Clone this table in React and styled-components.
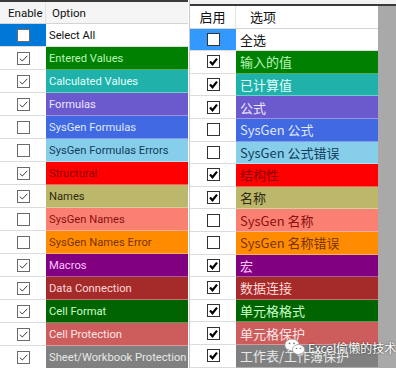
import React from 'react';
import styled, { createGlobalStyle } from 'styled-components';

const Global = createGlobalStyle`
  html, body {
    margin: 0;
    padding: 0;
    background: #ffffff;
  }
`;

const en = [
    { label: 'Select All', bg: '#ffffff', fg: '#111111', on: false, all: true },
    { label: 'Entered Values', bg: '#008000', fg: '#b8f5b8', on: true },
    { label: 'Calculated Values', bg: '#20b2aa', fg: '#e2fffd', on: true },
    { label: 'Formulas', bg: '#6a5acd', fg: '#ece6ff', on: true },
    { label: 'SysGen Formulas', bg: '#4169e1', fg: '#dfe8ff', on: false },
    { label: 'SysGen Formulas Errors', bg: '#87ceeb', fg: '#123c5c', on: false },
    { label: 'Structural', bg: '#ff0000', fg: '#8a0000', on: true },
    { label: 'Names', bg: '#bdb76b', fg: '#2e2c10', on: true },
    { label: 'SysGen Names', bg: '#fa8072', fg: '#8b1010', on: false },
    { label: 'SysGen Names Error', bg: '#ff8c00', fg: '#7a3300', on: false },
    { label: 'Macros', bg: '#800080', fg: '#ffc4ff', on: true },
    { label: 'Data Connection', bg: '#a52a2a', fg: '#ffdada', on: true },
    { label: 'Cell Format', bg: '#006400', fg: '#c6ffc6', on: true },
    { label: 'Cell Protection', bg: '#cd5c5c', fg: '#ffe6e6', on: true },
    { label: 'Sheet/Workbook Protection', bg: '#808080', fg: '#e8e8e8', on: true },
];

const zh = [
    '全选', '输入的值', '已计算值', '公式', 'SysGen 公式', 'SysGen 公式错误', '结构性', '名称',
    'SysGen 名称', 'SysGen 名称错误', '宏', '数据连接', '单元格格式', '单元格保护', '工作表/工作簿保护',
];

const Stage = styled.div`
  position: relative;
  width: 396px;
  height: 368px;
  overflow: hidden;
  display: flex;
  background: #ffffff;
`;

const LeftPanel = styled.div`
  width: 188px;
  flex: none;
  border-top: 2px solid #3a3a3a;
  font-family: "Segoe UI", Roboto, "Noto Sans", sans-serif;
  font-size: 11.2px;
`;

const Divider = styled.div`
  width: 1px;
  margin-left: 1px;
  flex: none;
  background: #c8c8c8;
`;

const RightPanel = styled.div`
  flex: 1;
  display: flex;
  flex-direction: column;
  padding-top: 4px;
  background: #f2f2f2;
  font-family: "Microsoft YaHei", "Noto Sans CJK SC", sans-serif;
  font-size: 13px;
`;

const RightBody = styled.div`
  flex: 1;
  display: flex;
  border-top: 2px solid #3a3a3a;
  background: #a9a9a9;
`;

const Grid = styled.div`
  width: ${p => p.$w}px;
  display: grid;
  grid-template-columns: 46px 1fr;
  grid-auto-rows: ${p => p.$row}px;
  grid-template-rows: ${p => p.$head}px;
  background: #ffffff;
  align-self: flex-start;
`;

const HeadCell = styled.div`
  display: flex;
  align-items: center;
  justify-content: ${p => (p.$center ? 'center' : 'flex-start')};
  padding-left: ${p => p.$pad}px;
  background: ${p => p.$bg};
  color: #111;
  border-bottom: 1px solid #d4d4d4;
  border-right: ${p => (p.$line ? '1px solid #e2e2e2' : 'none')};
  font-size: ${p => p.$size}px;
  box-sizing: border-box;
`;

const CheckCell = styled.div`
  display: flex;
  align-items: center;
  justify-content: center;
  background: ${p => p.$bg};
  border-bottom: 1px solid #dcdcdc;
  box-sizing: border-box;
`;

const OptionCell = styled.div`
  display: flex;
  align-items: center;
  padding-left: ${p => p.$pad}px;
  background: ${p => p.$bg};
  color: ${p => p.$fg};
  border-bottom: 1px solid ${p => (p.$white ? '#dcdcdc' : 'rgba(255,255,255,0.35)')};
  white-space: nowrap;
  overflow: hidden;
  box-sizing: border-box;
`;

const Box = styled.span`
  width: 13px;
  height: 13px;
  box-sizing: border-box;
  border: 1px solid ${p => (p.$bold ? '#333' : '#6a6a6a')};
  background: #ffffff;
  display: flex;
  align-items: center;
  justify-content: center;
`;

const Watermark = styled.div`
  position: absolute;
  left: 284px;
  top: 337px;
  display: flex;
  align-items: center;
  gap: 2px;
  color: #ffffff;
  font-family: "Noto Sans CJK SC", sans-serif;
  font-size: 12px;
  white-space: nowrap;
  text-shadow: 0 0 2px rgba(0, 0, 0, 0.7);
`;

const Check = ({ on, bold }) => (
    <Box $bold={bold}>
        {on && (
            bold ? (
                <svg width="11" height="11" viewBox="0 0 11 11">
                    <path d="M2 5.5 L4.5 8.2 L9 2.6" fill="none" stroke="#000" strokeWidth="2.2"/>
                </svg>
            ) : (
                <svg width="11" height="11" viewBox="0 0 11 11">
                    <path d="M1.8 5.6 L4.3 8 L9.3 2.8" fill="none" stroke="#3a3a3a" strokeWidth="1"/>
                </svg>
            )
        )}
    </Box>
);

const WeChat = () => (
    <svg width="22" height="20" viewBox="0 0 22 20">
        <ellipse cx="8" cy="8" rx="7.2" ry="6" fill="#fff" stroke="#9a9a9a" strokeWidth="0.8"/>
        <path d="M4 12.5 L3.2 15.5 L6.5 13.5 Z" fill="#fff" stroke="#9a9a9a" strokeWidth="0.6"/>
        <ellipse cx="14.5" cy="12.5" rx="6" ry="5" fill="#fff" stroke="#9a9a9a" strokeWidth="0.8"/>
        <path d="M17.5 16.4 L18.6 18.8 L15.5 17.2 Z" fill="#fff" stroke="#9a9a9a" strokeWidth="0.6"/>
        <circle cx="5.5" cy="6.3" r="0.9" fill="#777"/>
        <circle cx="10" cy="6.3" r="0.9" fill="#777"/>
        <circle cx="12.5" cy="11.5" r="0.8" fill="#777"/>
        <circle cx="16.5" cy="11.5" r="0.8" fill="#777"/>
    </svg>
);

const App = () => {
    return (
        <Stage>
            <Global/>
            <LeftPanel>
                <Grid $w={188} $head={22} $row={23}>
                    <HeadCell $bg="#f5f5f5" $pad={8} $size={11.5} $line>Enable</HeadCell>
                    <HeadCell $bg="#f5f5f5" $pad={6} $size={11.5}>Option</HeadCell>
                    {en.map(r => (
                        <React.Fragment key={r.label}>
                            <CheckCell $bg={r.all ? '#0078d7' : '#ffffff'}>
                                <Check on={r.on}/>
                            </CheckCell>
                            <OptionCell $bg={r.bg} $fg={r.fg} $pad={3} $white={r.all}>{r.label}</OptionCell>
                        </React.Fragment>
                    ))}
                </Grid>
            </LeftPanel>
            <Divider/>
            <RightPanel>
                <RightBody>
                    <Grid $w={188} $head={22.6} $row={22.6}>
                        <HeadCell $bg="#ffffff" $center $size={13} $line>启用</HeadCell>
                        <HeadCell $bg="#ffffff" $pad={14} $size={13}>选项</HeadCell>
                        {en.map((r, i) => (
                            <React.Fragment key={zh[i]}>
                                <CheckCell $bg={r.all ? '#3399ff' : '#ffffff'}>
                                    <Check on={r.on} bold/>
                                </CheckCell>
                                <OptionCell $bg={r.bg} $fg={r.fg} $pad={4} $white={r.all}>{zh[i]}</OptionCell>
                            </React.Fragment>
                        ))}
                    </Grid>
                </RightBody>
            </RightPanel>
            <Watermark>
                <WeChat/>
                <span>Excel偷懒的技术</span>
            </Watermark>
        </Stage>
    );
};

export default App;
